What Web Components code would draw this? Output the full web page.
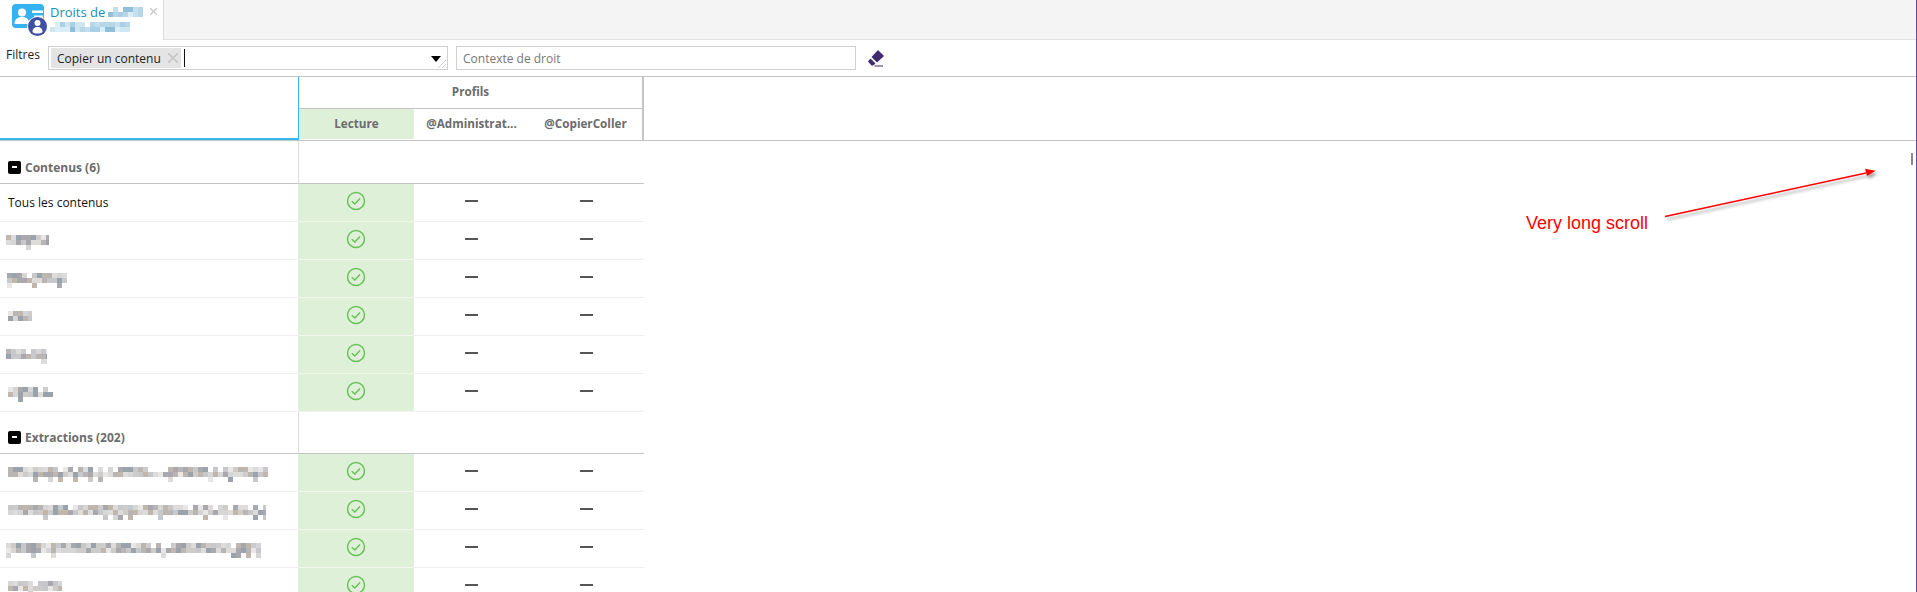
<!DOCTYPE html>
<html>
<head>
<meta charset="utf-8">
<style>
  html, body { margin: 0; height: 100%; background: #fff; overflow: hidden; }
  body { font-family: "Open Sans", sans-serif; font-size: 12px; color: #111; }
</style>
</head>
<body>
<rights-page>
  <tab-bar slot="tabs"></tab-bar>
  <filter-bar slot="filters"></filter-bar>
  <rights-table slot="table">
    <right-section label="Contenus (6)" h="43"></right-section>
    <right-row label="Tous les contenus"></right-row>
    <right-row mask="43" offset="6"></right-row>
    <right-row mask="60" offset="7"></right-row>
    <right-row mask="24" offset="8"></right-row>
    <right-row mask="41" offset="6"></right-row>
    <right-row mask="45" offset="8"></right-row>
    <right-section label="Extractions (202)" h="42"></right-section>
    <right-row mask="260" offset="8"></right-row>
    <right-row mask="258" offset="8"></right-row>
    <right-row mask="255" offset="6"></right-row>
    <right-row mask="54" offset="8"></right-row>
  </rights-table>
  <scroll-note slot="overlay"></scroll-note>
</rights-page>

<script>
// small seeded generator so the masked text always looks the same
let maskSeed = 11;
function nextRandom() {
  maskSeed = (maskSeed * 16807) % 2147483647;
  return maskSeed / 2147483647;
}

const GREY_MASK = ['#b9b5b2', '#cdcccb', '#a9a8ac', '#dedcda', '#d6d6d6', '#9aa2ab', '#bfb7ae', '#c6c8cc', '#e8e7e6'];
const BLUE_MASK = ['#a9d0e4', '#c4e0ee', '#8fbfd8', '#dbeef6', '#b6d7e8', '#cfe6f1'];
const ROW_SKIP = [0.12, 0, 0.82];

class MaskedText extends HTMLElement {
  connectedCallback() {
    const width = Number(this.getAttribute('w') || 40);
    const rows = Number(this.getAttribute('rows') || 3);
    const palette = this.getAttribute('tone') === 'blue' ? BLUE_MASK : GREY_MASK;
    const cell = 5;
    let rects = '';
    for (let y = 0; y < rows; y++) {
      for (let x = 0; x < width; x += cell) {
        if (nextRandom() < ROW_SKIP[y]) continue;
        const fill = palette[Math.floor(nextRandom() * palette.length)];
        rects += `<rect x="${x}" y="${y * cell}" width="${cell}" height="${cell}" fill="${fill}"/>`;
      }
    }
    const root = this.attachShadow({ mode: 'open' });
    root.innerHTML = `
      <style>:host { display: inline-block; line-height: 0; } svg { display: block; }</style>
      <svg width="${width}" height="${rows * cell}" viewBox="0 0 ${width} ${rows * cell}" aria-hidden="true" shape-rendering="crispEdges">${rects}</svg>
    `;
  }
}
customElements.define('masked-text', MaskedText);

const pageTemplate = document.createElement('template');
pageTemplate.innerHTML = `
  <style>
    :host {
      display: block;
      position: relative;
      width: 1917px;
      height: 592px;
      overflow: hidden;
      background: #fff;
      box-sizing: border-box;
      border-right: 1px solid #6a4a9c;
    }
  </style>
  <slot name="tabs"></slot>
  <slot name="filters"></slot>
  <slot name="table"></slot>
  <slot name="overlay"></slot>
`;
class RightsPage extends HTMLElement {
  constructor() {
    super();
    this.attachShadow({ mode: 'open' }).appendChild(pageTemplate.content.cloneNode(true));
  }
}
customElements.define('rights-page', RightsPage);

const tabTemplate = document.createElement('template');
tabTemplate.innerHTML = `
  <style>
    :host {
      display: flex;
      height: 40px;
      box-sizing: border-box;
      background: #f4f4f4;
      border-bottom: 1px solid #e2e2e2;
    }
    .tab {
      display: flex;
      width: 164px;
      height: 40px;
      box-sizing: border-box;
      background: #fff;
      border-right: 1px solid #dcdcdc;
      padding-left: 12px;
    }
    .icon { width: 36px; height: 36px; flex: none; margin-top: 3px; }
    .texts { margin-left: 2px; padding-top: 3px; }
    .title {
      display: flex;
      align-items: center;
      gap: 3px;
      height: 17px;
      color: #1a8cc0;
      font-size: 13px;
      white-space: nowrap;
    }
    .sub { display: block; margin-top: 2px; }
    .close { margin-left: 4px; }
  </style>
  <div class="tab">
    <svg class="icon" viewBox="0 0 36 36">
      <rect x="0" y="1" width="32" height="24" rx="4" fill="#35b3f0"/>
      <circle cx="10" cy="9.500" r="4" fill="#fff"/>
      <path d="M2.500 21c0-4.500 3-7 7.500-7s7.500 2.500 7.500 7z" fill="#fff"/>
      <rect x="20" y="7.500" width="11" height="2.500" fill="#fff"/>
      <rect x="22" y="12.500" width="9" height="2.500" fill="#fff"/>
      <circle cx="25.500" cy="24" r="10.500" fill="#fff"/>
      <circle cx="25.500" cy="23.500" r="9.500" fill="#3f4fa3"/>
      <circle cx="25.500" cy="20" r="3" fill="#fff"/>
      <path d="M20.500 29c0-3.500 2-5 5-5s5 1.500 5 5c-1 1-3 1.500-5 1.500s-4-.5-5-1.500z" fill="#fff"/>
    </svg>
    <div class="texts">
      <div class="title">Droits de <masked-text w="35" rows="2" tone="blue"></masked-text>
        <svg class="close" width="7" height="7" viewBox="0 0 7 7"><path d="M0 0 7 7M7 0 0 7" stroke="#c8c8c8" stroke-width="1.300"/></svg>
      </div>
      <masked-text class="sub" w="80" rows="2" tone="blue"></masked-text>
    </div>
  </div>
`;
class TabBar extends HTMLElement {
  constructor() {
    super();
    this.attachShadow({ mode: 'open' }).appendChild(tabTemplate.content.cloneNode(true));
  }
}
customElements.define('tab-bar', TabBar);

const filterTemplate = document.createElement('template');
filterTemplate.innerHTML = `
  <style>
    :host {
      display: flex;
      align-items: flex-start;
      height: 36px;
      box-sizing: border-box;
      padding: 6px 0 0 6px;
      font-size: 12px;
    }
    .label { width: 42px; line-height: 16px; margin-top: 1px; color: #222; }
    .select, .context {
      width: 400px;
      height: 24px;
      box-sizing: border-box;
      border: 1px solid #d0d0d0;
      flex: none;
    }
    .select {
      display: flex;
      align-items: center;
      padding-left: 2px;
      position: relative;
    }
    .chip {
      display: flex;
      align-items: center;
      width: 130px;
      height: 20px;
      box-sizing: border-box;
      background: #e4e4e4;
      padding-left: 6px;
      color: #222;
      white-space: nowrap;
    }
    .chip svg { margin-left: 7px; flex: none; }
    .caret { width: 1px; height: 18px; background: #111; margin-left: 3px; }
    .arrow {
      position: absolute;
      right: 6px;
      top: 9px;
      border: 5px solid transparent;
      border-top: 6px solid #000;
      border-bottom: 0;
    }
    .grip { position: absolute; right: 0; bottom: 0; }
    .context {
      margin-left: 8px;
      padding-left: 6px;
      line-height: 24px;
      color: #777;
      font-size: 12px;
    }
    .eraser { margin: 4px 0 0 12px; flex: none; }
  </style>
  <div class="label">Filtres</div>
  <div class="select">
    <div class="chip">Copier un contenu
      <svg width="10" height="10" viewBox="0 0 10 10"><path d="M0 0 10 10M10 0 0 10" stroke="#c6c6c6" stroke-width="1.600"/></svg>
    </div>
    <div class="caret"></div>
    <div class="arrow"></div>
    <svg class="grip" width="10" height="10" viewBox="0 0 10 10">
      <path d="M9 1 1 9M9 5 5 9" stroke="#ccc" fill="none"/>
    </svg>
  </div>
  <div class="context">Contexte de droit</div>
  <svg class="eraser" width="17" height="17" viewBox="0 0 17 17">
    <path d="M10 0 16 6 9 12.500 3.500 7z" fill="#3f2a6e"/>
    <path d="M2.500 8.500 7.500 13.500 5 15.500 3.500 15.500 0 11.500z" fill="#3f2a6e"/>
    <rect x="6.500" y="15.500" width="8.500" height="1" fill="#3f2a6e"/>
  </svg>
`;
class FilterBar extends HTMLElement {
  constructor() {
    super();
    this.attachShadow({ mode: 'open' }).appendChild(filterTemplate.content.cloneNode(true));
  }
}
customElements.define('filter-bar', FilterBar);

const tableTemplate = document.createElement('template');
tableTemplate.innerHTML = `
  <style>
    :host { display: block; }
    .head {
      display: grid;
      grid-template-columns: 299px 345px 1fr;
      height: 65px;
      box-sizing: border-box;
      border-top: 1px solid #c4c4c4;
      border-bottom: 1px solid #c4c4c4;
    }
    .corner {
      border-bottom: 2px solid #35b6ef;
      border-right: 1px solid #35b6ef;
      box-sizing: border-box;
      height: 63px;
    }
    .profiles {
      border-right: 2px solid #c4c4c4;
      box-sizing: border-box;
      font-weight: 700;
      font-size: 11.700px;
      color: #6c6c6c;
    }
    .group {
      height: 32px;
      line-height: 29px;
      text-align: center;
      box-sizing: border-box;
      border-bottom: 1px solid #c4c4c4;
    }
    .cols {
      display: grid;
      grid-template-columns: 115px 115px 113px;
      height: 30px;
      line-height: 28px;
      text-align: center;
      white-space: nowrap;
    }
    .cols .on { background: #dff0d8; }
  </style>
  <div class="head">
    <div class="corner"></div>
    <div class="profiles">
      <div class="group">Profils</div>
      <div class="cols">
        <div class="on">Lecture</div>
        <div>@Administrat...</div>
        <div>@CopierColler</div>
      </div>
    </div>
    <div></div>
  </div>
  <slot></slot>
`;
class RightsTable extends HTMLElement {
  constructor() {
    super();
    this.attachShadow({ mode: 'open' }).appendChild(tableTemplate.content.cloneNode(true));
  }
}
customElements.define('rights-table', RightsTable);

class RightSection extends HTMLElement {
  connectedCallback() {
    const height = this.getAttribute('h') || 43;
    const root = this.attachShadow({ mode: 'open' });
    root.innerHTML = `
      <style>
        :host {
          display: grid;
          grid-template-columns: 299px 345px;
          width: 644px;
          height: ${height}px;
          box-sizing: border-box;
        }
        .name {
          display: flex;
          align-items: center;
          gap: 4px;
          padding: ${height - 33}px 0 0 8px;
          box-sizing: border-box;
          border-right: 1px solid #dcdcdc;
          border-bottom: 1px solid #c4c4c4;
          font-weight: 700;
          font-size: 12px;
          color: #6c6c6c;
          white-space: nowrap;
        }
        .toggle {
          display: flex;
          align-items: center;
          justify-content: center;
          width: 13px;
          height: 13px;
          border-radius: 2px;
          background: #000;
        }
        .toggle i { width: 5px; height: 1.500px; background: #fff; }
        .fill { border-bottom: 1px solid #c4c4c4; }
      </style>
      <div class="name"><span class="toggle"><i></i></span>${this.getAttribute('label')}</div>
      <div class="fill"></div>
    `;
  }
}
customElements.define('right-section', RightSection);

class RightRow extends HTMLElement {
  connectedCallback() {
    const mask = this.getAttribute('mask');
    const label = this.getAttribute('label');
    const offset = this.getAttribute('offset') || 8;
    const root = this.attachShadow({ mode: 'open' });
    root.innerHTML = `
      <style>
        :host {
          display: grid;
          grid-template-columns: 298px 116px 114px 116px;
          width: 644px;
          height: 38px;
          box-sizing: border-box;
        }
        .name {
          display: flex;
          align-items: center;
          box-sizing: border-box;
          border-bottom: 1px solid #eee;
          font-size: 12px;
          color: #111;
          white-space: nowrap;
        }
        .name masked-text { margin-top: 3px; }
        .cell {
          display: flex;
          align-items: flex-start;
          justify-content: center;
          box-sizing: border-box;
          border-bottom: 1px solid #eee;
        }
        .on { background: #dff0d8; border-bottom-color: #f0f8ec; padding-top: 7px; }
        .dash { width: 13px; height: 2px; margin-top: 16px; background: #555; }
        svg { display: block; }
      </style>
      <div class="name" style="padding-left:${offset}px">${label ? label : `<masked-text w="${mask}"></masked-text>`}</div>
      <div class="cell on">
        <svg width="20" height="20" viewBox="0 0 20 20">
          <circle cx="10" cy="10" r="8.500" fill="none" stroke="#69c15a" stroke-width="1.500"/>
          <path d="M5.800 10.300 8.800 13 14 7.500" fill="none" stroke="#69c15a" stroke-width="1.500"/>
        </svg>
      </div>
      <div class="cell"><div class="dash"></div></div>
      <div class="cell"><div class="dash"></div></div>
    `;
  }
}
customElements.define('right-row', RightRow);

const noteTemplate = document.createElement('template');
noteTemplate.innerHTML = `
  <style>
    :host { display: block; }
    .text {
      position: absolute;
      left: 1526px;
      top: 213px;
      font-family: "Liberation Sans", sans-serif;
      font-size: 18px;
      line-height: 20px;
      color: #f00;
      white-space: nowrap;
    }
    .arrow { position: absolute; left: 1650px; top: 160px; }
    .thumb {
      position: absolute;
      left: 1911px;
      top: 153px;
      width: 2px;
      height: 12px;
      background: #888;
    }
  </style>
  <div class="text">Very long scroll</div>
  <svg class="arrow" width="240" height="70" viewBox="0 0 240 70">
    <defs>
      <filter id="sh" x="-10%" y="-50%" width="120%" height="200%">
        <feDropShadow dx="2" dy="3" stdDeviation="1.500" flood-color="#000" flood-opacity="0.35"/>
      </filter>
    </defs>
    <g filter="url(#sh)">
      <path d="M15 56.500 216 13" stroke="#f00" stroke-width="1.500" fill="none"/>
      <path d="M225.700 10.700 215 8.700 217 16z" fill="#f00"/>
    </g>
  </svg>
  <div class="thumb"></div>
`;
class ScrollNote extends HTMLElement {
  constructor() {
    super();
    this.attachShadow({ mode: 'open' }).appendChild(noteTemplate.content.cloneNode(true));
  }
}
customElements.define('scroll-note', ScrollNote);
</script>
</body>
</html>
